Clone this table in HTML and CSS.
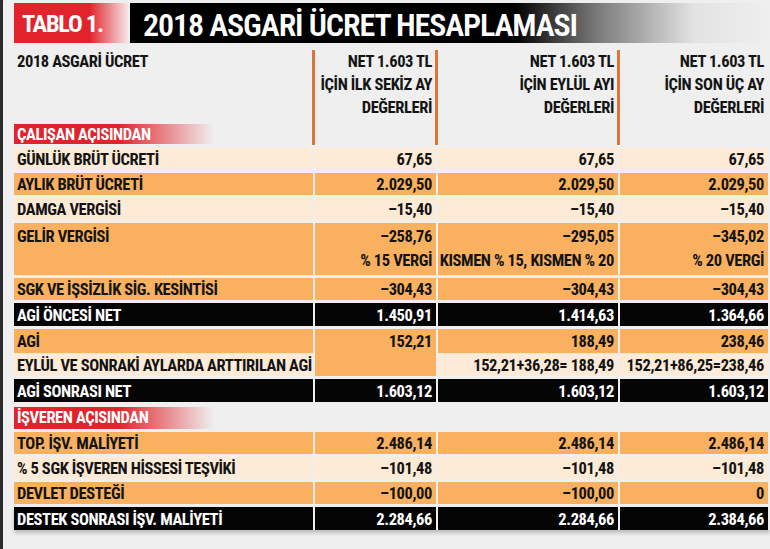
FILE: index.html
```html
<!DOCTYPE html>
<html lang="tr">
<head>
<meta charset="utf-8">
<title>2018 Asgari Ücret Hesaplaması</title>
<link rel="stylesheet" href="styles.css">
</head>
<body>
<div class="page">
  <div class="titlebar">
    <div class="tablo">TABLO 1.</div>
    <div class="title">2018 ASGARİ ÜCRET HESAPLAMASI</div>
  </div>

  <div class="head">
    <div class="head-label">
      <div class="head-name">2018 ASGARİ ÜCRET</div>
      <div class="section section-top">ÇALIŞAN AÇISINDAN</div>
    </div>
    <div class="head-col">NET 1.603 TL<br>İÇİN İLK SEKİZ AY<br>DEĞERLERİ</div>
    <div class="head-col">NET 1.603 TL<br>İÇİN EYLÜL AYI<br>DEĞERLERİ</div>
    <div class="head-col">NET 1.603 TL<br>İÇİN SON ÜÇ AY<br>DEĞERLERİ</div>
  </div>

  <div class="row light">
    <div class="lbl">GÜNLÜK BRÜT ÜCRETİ</div>
    <div class="val">67,65</div><div class="val">67,65</div><div class="val">67,65</div>
  </div>
  <div class="row orange">
    <div class="lbl">AYLIK BRÜT ÜCRETİ</div>
    <div class="val">2.029,50</div><div class="val">2.029,50</div><div class="val">2.029,50</div>
  </div>
  <div class="row light">
    <div class="lbl">DAMGA VERGİSİ</div>
    <div class="val">–15,40</div><div class="val">–15,40</div><div class="val">–15,40</div>
  </div>
  <div class="row orange double">
    <div class="lbl">GELİR VERGİSİ</div>
    <div class="val">–258,76<br>% 15 VERGİ</div>
    <div class="val">–295,05<br>KISMEN % 15, KISMEN % 20</div>
    <div class="val">–345,02<br>% 20 VERGİ</div>
  </div>
  <div class="row orange">
    <div class="lbl">SGK VE İŞSİZLİK SİG. KESİNTİSİ</div>
    <div class="val">–304,43</div><div class="val">–304,43</div><div class="val">–304,43</div>
  </div>
  <div class="row dark">
    <div class="lbl">AGİ ÖNCESİ NET</div>
    <div class="val">1.450,91</div><div class="val">1.414,63</div><div class="val">1.364,66</div>
  </div>
  <div class="row split">
    <div class="cell-stack">
      <div class="lbl sub orange">AGİ</div>
      <div class="lbl sub light">EYLÜL VE SONRAKİ AYLARDA ARTTIRILAN AGİ</div>
    </div>
    <div class="val orange tall">152,21</div>
    <div class="cell-stack">
      <div class="val sub orange">188,49</div>
      <div class="val sub light">152,21+36,28= 188,49</div>
    </div>
    <div class="cell-stack">
      <div class="val sub orange">238,46</div>
      <div class="val sub light">152,21+86,25=238,46</div>
    </div>
  </div>
  <div class="row dark">
    <div class="lbl">AGİ SONRASI NET</div>
    <div class="val">1.603,12</div><div class="val">1.603,12</div><div class="val">1.603,12</div>
  </div>

  <div class="section section-mid">İŞVEREN AÇISINDAN</div>

  <div class="row orange">
    <div class="lbl">TOP. İŞV. MALİYETİ</div>
    <div class="val">2.486,14</div><div class="val">2.486,14</div><div class="val">2.486,14</div>
  </div>
  <div class="row light">
    <div class="lbl">% 5 SGK İŞVEREN HİSSESİ TEŞVİKİ</div>
    <div class="val">–101,48</div><div class="val">–101,48</div><div class="val">–101,48</div>
  </div>
  <div class="row orange">
    <div class="lbl">DEVLET DESTEĞİ</div>
    <div class="val">–100,00</div><div class="val">–100,00</div><div class="val">0</div>
  </div>
  <div class="row dark last">
    <div class="lbl">DESTEK SONRASI İŞV. MALİYETİ</div>
    <div class="val">2.284,66</div><div class="val">2.284,66</div><div class="val">2.384,66</div>
  </div>
</div>
</body>
</html>
```
FILE: styles.css
```css
html, body {
  margin: 0;
  padding: 0;
}
html {
  overflow: hidden;
}
body {
  background: #efefef;
  border-left: 3px solid #2b2b2b;
  height: 549px;
  overflow: hidden;
  box-sizing: border-box;
  font-family: "Roboto", "Open Sans", sans-serif;
  font-stretch: 75%;
  font-weight: bold;
  color: #141414;
  font-size: 16.5px;
  letter-spacing: -0.4px;
}
.page {
  padding: 3px 0 0 11px;
}
.titlebar {
  display: flex;
  height: 40px;
  gap: 2px;
}
.tablo {
  width: 114px;
  box-sizing: border-box;
  padding-left: 8px;
  background: linear-gradient(90deg, #e1232b 0%, #e1232b 66%, #f6e6e6 100%);
  color: #fff;
  font-size: 24.5px;
  line-height: 42px;
  letter-spacing: -1.3px;
}
.title {
  flex: 1;
  padding-left: 13px;
  background: linear-gradient(90deg, #000 0%, #000 60%, #7a7a7a 73%, #e2e2e2 88%, #efefef 100%);
  color: #fff;
  font-size: 32px;
  line-height: 44px;
  letter-spacing: -1.1px;
  font-weight: 600;
}
.head {
  display: grid;
  grid-template-columns: 299px 121px 180px 148px;
  column-gap: 2px;
  height: 95px;
  margin-top: 7px;
}
.head-label {
  display: flex;
  flex-direction: column;
  justify-content: space-between;
  padding-bottom: 1px;
}
.head-name {
  line-height: 23px;
  padding-left: 3px;
}
.head-col {
  margin-left: -3px;
  border-left: 3px solid #e0733a;
  text-align: right;
  padding-right: 4px;
  line-height: 23px;
}
.section {
  color: #fff;
  padding-left: 3px;
  width: 200px;
  box-sizing: border-box;
  background: linear-gradient(90deg, #e1232b 0%, #e1232b 52%, rgba(225, 35, 43, 0) 100%);
}
.section-top {
  height: 20px;
  line-height: 21px;
}
.section-mid {
  height: 22px;
  line-height: 22px;
  margin-top: 5px;
}
.row {
  display: grid;
  grid-template-columns: 299px 121px 180px 148px;
  column-gap: 2px;
  margin-top: 3px;
}
.row > .lbl, .row > .val, .sub {
  height: 22px;
  box-sizing: border-box;
  padding-top: 2px;
  line-height: 20px;
  white-space: nowrap;
}
.lbl {
  padding-left: 3px;
}
.val {
  text-align: right;
  padding-right: 4px;
}
.light > .lbl, .light > .val, .sub.light {
  background: #fdebd8;
}
.orange > .lbl, .orange > .val, .sub.orange, .val.tall {
  background: #f9b15f;
}
.dark > .lbl, .dark > .val {
  background: #050505;
  color: #fff;
}
.dark > .lbl, .dark > .val {
  height: 23px;
  padding-top: 2px;
  line-height: 21px;
}
.row.double > .lbl, .row.double > .val {
  height: 52px;
  padding-top: 2px;
  line-height: 24px;
}
.cell-stack {
  display: flex;
  flex-direction: column;
}
.sub.orange {
  height: 24px;
  line-height: 22px;
}
.sub.light {
  height: 23px;
  line-height: 21px;
}
.val.tall {
  height: 47px;
  line-height: 22px;
  padding-top: 2px;
}
.last {
  box-shadow: 0 3px 4px rgba(0, 0, 0, 0.22);
}
```
